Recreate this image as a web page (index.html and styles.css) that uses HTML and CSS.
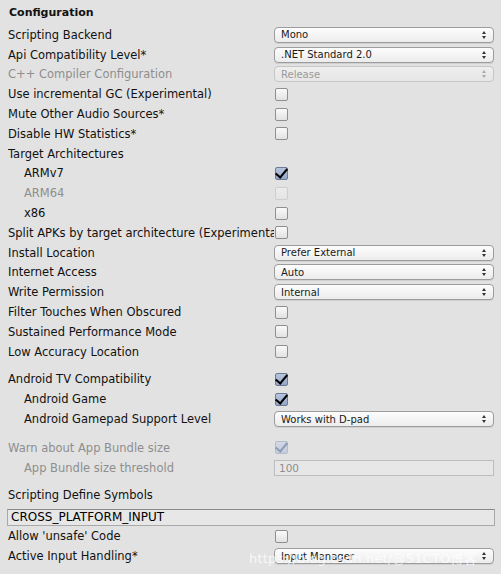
FILE: index.html
```html
<!DOCTYPE html>
<html lang="en">
<head>
    <meta charset="UTF-8">
    <title>Player Settings - Configuration</title>
    <link rel="stylesheet" href="styles.css">
</head>
<body>
    <div class="panel">
        <div class="heading">Configuration</div>

        <div class="row">
            <span class="label">Scripting Backend</span>
            <div class="popup"><span>Mono</span><i class="arrows"></i></div>
        </div>
        <div class="row">
            <span class="label">Api Compatibility Level*</span>
            <div class="popup"><span>.NET Standard 2.0</span><i class="arrows"></i></div>
        </div>
        <div class="row disabled">
            <span class="label">C++ Compiler Configuration</span>
            <div class="popup"><span>Release</span><i class="arrows"></i></div>
        </div>
        <div class="row">
            <span class="label">Use incremental GC (Experimental)</span>
            <span class="check"></span>
        </div>
        <div class="row">
            <span class="label">Mute Other Audio Sources*</span>
            <span class="check"></span>
        </div>
        <div class="row">
            <span class="label">Disable HW Statistics*</span>
            <span class="check"></span>
        </div>
        <div class="row">
            <span class="label">Target Architectures</span>
        </div>
        <div class="row sub">
            <span class="label">ARMv7</span>
            <span class="check on"></span>
        </div>
        <div class="row sub disabled">
            <span class="label">ARM64</span>
            <span class="check"></span>
        </div>
        <div class="row sub">
            <span class="label">x86</span>
            <span class="check"></span>
        </div>
        <div class="row">
            <span class="label">Split APKs by target architecture (Experimental)</span>
            <span class="check"></span>
        </div>
        <div class="row">
            <span class="label">Install Location</span>
            <div class="popup"><span>Prefer External</span><i class="arrows"></i></div>
        </div>
        <div class="row">
            <span class="label">Internet Access</span>
            <div class="popup"><span>Auto</span><i class="arrows"></i></div>
        </div>
        <div class="row">
            <span class="label">Write Permission</span>
            <div class="popup"><span>Internal</span><i class="arrows"></i></div>
        </div>
        <div class="row">
            <span class="label">Filter Touches When Obscured</span>
            <span class="check"></span>
        </div>
        <div class="row">
            <span class="label">Sustained Performance Mode</span>
            <span class="check"></span>
        </div>
        <div class="row">
            <span class="label">Low Accuracy Location</span>
            <span class="check"></span>
        </div>

        <div class="group">
            <div class="row">
                <span class="label">Android TV Compatibility</span>
                <span class="check on"></span>
            </div>
            <div class="row sub">
                <span class="label">Android Game</span>
                <span class="check on"></span>
            </div>
            <div class="row sub">
                <span class="label">Android Gamepad Support Level</span>
                <div class="popup"><span>Works with D-pad</span><i class="arrows"></i></div>
            </div>
        </div>

        <div class="group wide">
            <div class="row disabled">
                <span class="label">Warn about App Bundle size</span>
                <span class="check on"></span>
            </div>
            <div class="row sub disabled">
                <span class="label">App Bundle size threshold</span>
                <div class="field">100</div>
            </div>
        </div>

        <div class="group">
            <div class="row">
                <span class="label">Scripting Define Symbols</span>
            </div>
            <div class="symbols">
                <div class="field">CROSS_PLATFORM_INPUT</div>
            </div>
            <div class="row">
                <span class="label">Allow 'unsafe' Code</span>
                <span class="check"></span>
            </div>
            <div class="row">
                <span class="label">Active Input Handling*</span>
                <div class="popup"><span>Input Manager</span><i class="arrows"></i></div>
            </div>
        </div>

        <div class="watermark">https://blog.csdn.net/@51CTO博客</div>
    </div>
</body>
</html>
```

FILE: styles.css
```css
* {
    margin: 0;
    padding: 0;
    box-sizing: border-box;
}

body {
    font-family: "DejaVu Sans", "Noto Sans CJK SC", sans-serif;
    font-size: 11.5px;
    color: #111;
    background: #e2e2e2;
}

.panel {
    position: relative;
    width: 501px;
    height: 574px;
    padding: 1px 7px 0 8px;
    overflow: hidden;
}

.heading {
    height: 24px;
    line-height: 24px;
    font-weight: bold;
    font-size: 11px;
    padding-left: 1px;
}

.row {
    display: flex;
    align-items: center;
    height: 19.8px;
}

.label {
    flex: 0 0 266px;
    white-space: nowrap;
    overflow: hidden;
}

.sub .label {
    padding-left: 16px;
}

.disabled .label {
    color: #8e8e8e;
}

.group {
    margin-top: 8px;
}

.group.wide {
    margin-top: 9px;
}

/* popup (dropdown) */
.popup {
    flex: 1;
    height: 16px;
    display: flex;
    align-items: center;
    justify-content: space-between;
    padding: 0 6px 0 6px;
    border: 1px solid #9c9c9c;
    border-radius: 4px;
    background: linear-gradient(#fdfdfd, #ececec);
    box-shadow: 0 1px 0 rgba(0,0,0,0.08);
    font-size: 10px;
    color: #1a1a1a;
}

.disabled .popup {
    border-color: #c6c6c6;
    background: linear-gradient(#eeeeee, #e6e6e6);
    color: #9a9a9a;
    box-shadow: none;
}

.arrows {
    position: relative;
    width: 5px;
    height: 8px;
}

.arrows::before,
.arrows::after {
    content: "";
    position: absolute;
    left: 0;
    border-left: 2.5px solid transparent;
    border-right: 2.5px solid transparent;
}

.arrows::before {
    top: 0;
    border-bottom: 3px solid #333;
}

.arrows::after {
    bottom: 0;
    border-top: 3px solid #333;
}

.disabled .arrows::before { border-bottom-color: #aaa; }
.disabled .arrows::after { border-top-color: #aaa; }

/* checkbox */
.check {
    position: relative;
    width: 13px;
    height: 13px;
    margin-left: 1px;
    border: 1px solid #8f8f8f;
    border-radius: 2px;
    background: linear-gradient(#fafafa, #e2e2e2);
}

.disabled .check {
    border-color: #cdcdcd;
    background: linear-gradient(#ececec, #e4e4e4);
}

.check.on {
    border-color: #6d7a95;
    background: linear-gradient(#b7c4dd, #94a6c8);
}

.check.on::after {
    content: "";
    position: absolute;
    left: 2px;
    top: -2px;
    width: 5px;
    height: 10px;
    border-right: 2.5px solid #000;
    border-bottom: 2.5px solid #000;
    transform: rotate(40deg);
}

.disabled .check.on {
    border-color: #b5bccb;
    background: linear-gradient(#d3d8e4, #c5ccdc);
}

.disabled .check.on::after {
    border-color: #8f9bb5;
}

/* text fields */
.field {
    flex: 1;
    height: 16px;
    line-height: 14px;
    padding: 0 4px;
    border: 1px solid #a9a9a9;
    border-top-color: #8a8a8a;
    background: #e7e7e7;
    font-size: 11.5px;
}

.disabled .field {
    border-color: #bdbdbd;
    color: #8e8e8e;
    font-size: 10.5px;
}

.symbols {
    display: flex;
    height: 21px;
    padding-top: 3.6px;
    margin-left: -1px;
    margin-right: -1px;
}

.symbols .field {
    height: 17px;
    line-height: 15px;
    padding-left: 3px;
    font-size: 12px;
    color: #000;
}

.watermark {
    position: absolute;
    left: 249px;
    top: 548px;
    font-size: 13px;
    color: rgba(255,255,255,0.75);
    letter-spacing: 0.2px;
    white-space: nowrap;
}
```
